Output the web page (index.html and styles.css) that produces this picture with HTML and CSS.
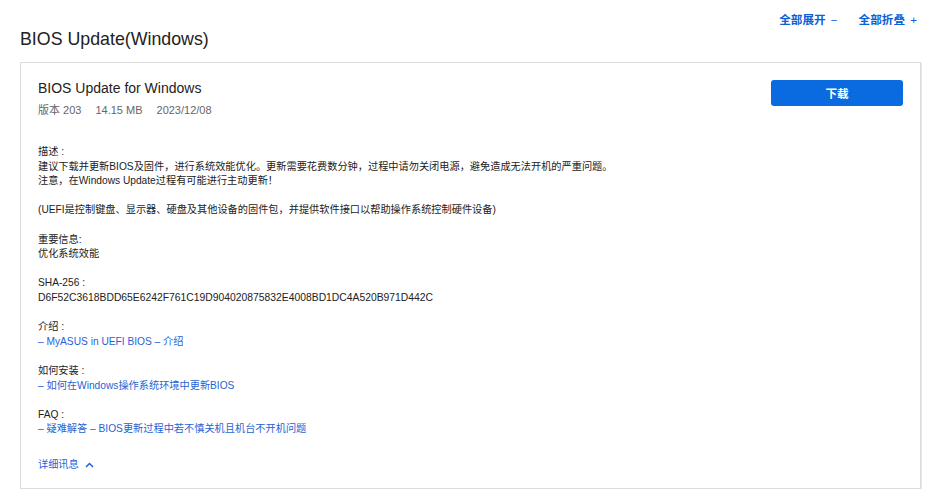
FILE: index.html
```html
<!DOCTYPE html>
<html lang="zh-CN">
<head>
<meta charset="utf-8">
<title>BIOS Update(Windows)</title>
<link rel="stylesheet" href="styles.css">
</head>
<body>
<div class="page">
  <header class="head">
    <h1 class="head-title">BIOS Update(Windows)</h1>
    <div class="head-actions">
      <a class="head-link" href="#">全部展开 <span class="sign">−</span></a>
      <a class="head-link" href="#">全部折叠 <span class="sign">+</span></a>
    </div>
  </header>
  <section class="card">
    <div class="card-top">
      <div class="card-info">
        <h2 class="card-title">BIOS Update for Windows</h2>
        <div class="card-meta"><span>版本 203</span><span>14.15 MB</span><span>2023/12/08</span></div>
      </div>
      <a class="btn" href="#">下载</a>
    </div>
    <div class="desc">
      <p>描述 :<br>建议下载并更新BIOS及固件，进行系统效能优化。更新需要花费数分钟，过程中请勿关闭电源，避免造成无法开机的严重问题。<br>注意，在Windows Update过程有可能进行主动更新！</p>
      <p>(UEFI是控制键盘、显示器、硬盘及其他设备的固件包，并提供软件接口以帮助操作系统控制硬件设备)</p>
      <p>重要信息:<br>优化系统效能</p>
      <p>SHA-256 :<br><span class="hash">D6F52C3618BDD65E6242F761C19D904020875832E4008BD1DC4A520B971D442C</span></p>
      <p>介绍 :<br><a class="link" href="#">– MyASUS in UEFI BIOS – 介绍</a></p>
      <p>如何安装 :<br><a class="link" href="#">– 如何在Windows操作系统环境中更新BIOS</a></p>
      <p>FAQ :<br><a class="link" href="#">– 疑难解答 – BIOS更新过程中若不慎关机且机台不开机问题</a></p>
    </div>
    <a class="more" href="#">详细讯息
      <svg class="chev" width="9" height="6" viewBox="0 0 9 6"><path d="M1 5 L4.5 1.5 L8 5" fill="none" stroke="currentColor" stroke-width="1.5"/></svg>
    </a>
  </section>
</div>
</body>
</html>
```

FILE: styles.css
```css
* { box-sizing: border-box; }
html, body { margin: 0; padding: 0; background: #fff; }
body {
  font-family: "Liberation Sans", "Noto Sans CJK SC", sans-serif;
  color: #222;
}
a { text-decoration: none; }
.page { padding: 0 7px 0 20px; }

.head {
  display: flex;
  justify-content: space-between;
  align-items: flex-start;
  padding-top: 12px;
}
.head-title {
  margin: 15px 0 0;
  font-size: 17.8px;
  line-height: 24px;
  font-weight: 400;
  color: #222;
}
.head-actions {
  display: flex;
  gap: 21px;
  padding-right: 4px;
}
.head-link {
  font-size: 11.6px;
  line-height: 16px;
  font-weight: 700;
  color: #0a5fd6;
}
.head-link .sign { font-weight: 400; margin-left: 2px; }

.card {
  margin-top: 11px;
  border: 1px solid #dcdcdc;
  box-shadow: 1px 1px 0 #e6e6e6;
  padding: 17px 17px 16px 17px;
}
.card-top {
  display: flex;
  justify-content: space-between;
  align-items: flex-start;
}
.card-title {
  margin: 0;
  font-size: 14px;
  line-height: 16px;
  font-weight: 400;
  color: #222;
}
.card-meta {
  margin-top: 7px;
  display: flex;
  gap: 14px;
  font-size: 11px;
  line-height: 14px;
  color: #666;
}
.btn {
  width: 132px;
  height: 26px;
  border-radius: 3px;
  background: #0a6ae0;
  color: #fff;
  font-size: 11.6px;
  font-weight: 700;
  display: flex;
  align-items: center;
  justify-content: center;
}

.desc {
  margin-top: 28px;
  font-size: 10.2px;
  line-height: 14.6px;
  color: #222;
}
.desc p { margin: 0 0 14.6px; }
.desc p:last-child { margin-bottom: 0; }
.hash { font-size: 10.35px; }
.link { color: #1f63d4; }

.more {
  margin-top: 21px;
  display: inline-flex;
  align-items: center;
  gap: 6px;
  font-size: 10.2px;
  line-height: 14.6px;
  color: #1f63d4;
}
.chev { display: block; }
```
